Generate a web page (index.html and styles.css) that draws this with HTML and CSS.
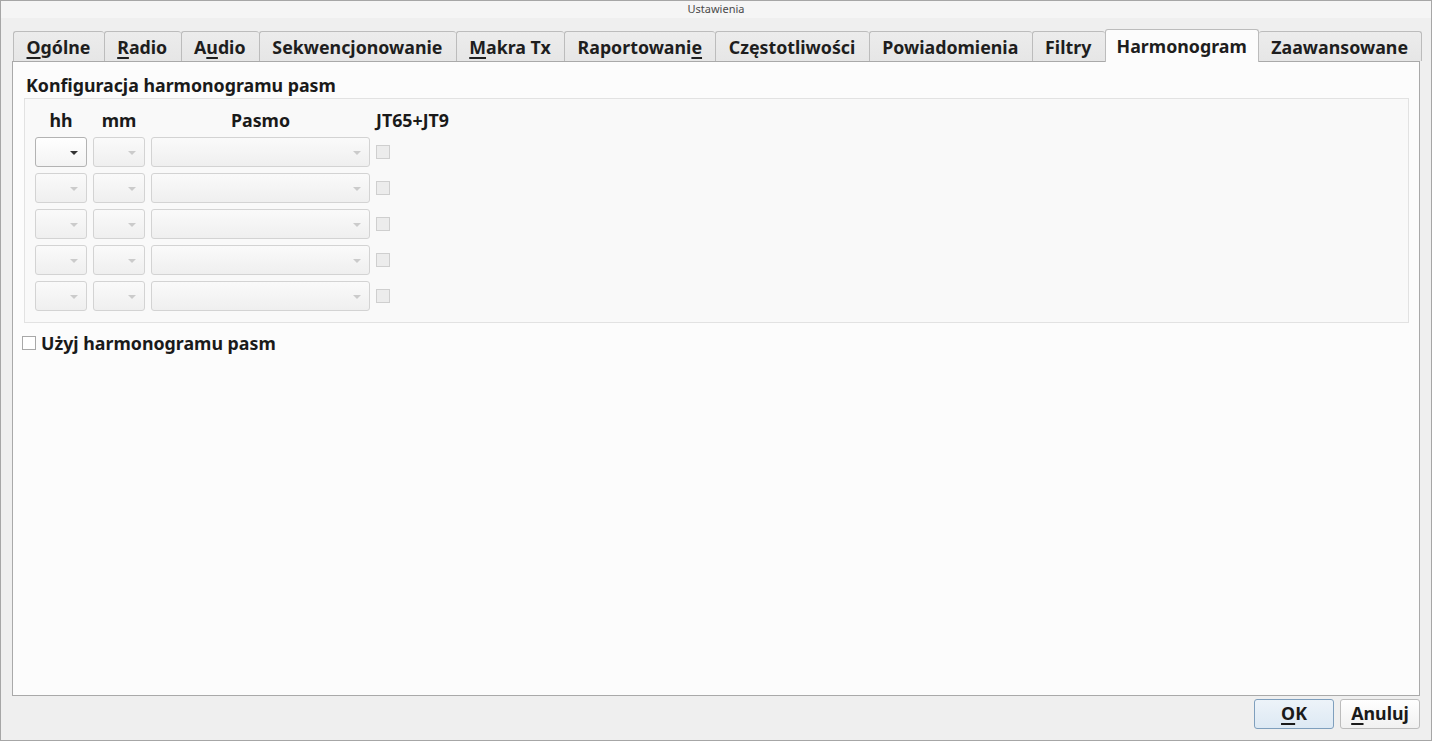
FILE: index.html
```html
<!DOCTYPE html>
<html lang="pl">
<head>
<meta charset="utf-8">
<title>Ustawienia</title>
<link rel="stylesheet" href="styles.css">
</head>
<body>
<div class="window">
  <div class="titlebar">Ustawienia</div>
  <div class="tabs">
    <div class="tab"><u>O</u>gólne</div>
    <div class="tab"><u>R</u>adio</div>
    <div class="tab">A<u>u</u>dio</div>
    <div class="tab">Sekwencjonowanie</div>
    <div class="tab"><u>M</u>akra Tx</div>
    <div class="tab">Raportowani<u>e</u></div>
    <div class="tab">Częstotliwości</div>
    <div class="tab">Powiadomienia</div>
    <div class="tab">Filtry</div>
    <div class="tab active">Harmonogram</div>
    <div class="tab">Zaawansowane</div>
  </div>
  <div class="pane">
    <div class="group-title">Konfiguracja harmonogramu pasm</div>
    <div class="group">
      <div class="grid">
        <div class="hdr c">hh</div>
        <div class="hdr c">mm</div>
        <div class="hdr c">Pasmo</div>
        <div class="hdr">JT65+JT9</div>

        <div class="combo small enabled"><span class="arrow"></span></div>
        <div class="combo small"><span class="arrow"></span></div>
        <div class="combo wide"><span class="arrow"></span></div>
        <div class="cbcell"><span class="cb"></span></div>

        <div class="combo small"><span class="arrow"></span></div>
        <div class="combo small"><span class="arrow"></span></div>
        <div class="combo wide"><span class="arrow"></span></div>
        <div class="cbcell"><span class="cb"></span></div>

        <div class="combo small"><span class="arrow"></span></div>
        <div class="combo small"><span class="arrow"></span></div>
        <div class="combo wide"><span class="arrow"></span></div>
        <div class="cbcell"><span class="cb"></span></div>

        <div class="combo small"><span class="arrow"></span></div>
        <div class="combo small"><span class="arrow"></span></div>
        <div class="combo wide"><span class="arrow"></span></div>
        <div class="cbcell"><span class="cb"></span></div>

        <div class="combo small"><span class="arrow"></span></div>
        <div class="combo small"><span class="arrow"></span></div>
        <div class="combo wide"><span class="arrow"></span></div>
        <div class="cbcell"><span class="cb"></span></div>
      </div>
    </div>
    <label class="use">
      <span class="cb2"></span>
      <span>Użyj harmonogramu pasm</span>
    </label>
  </div>
  <div class="buttons">
    <div class="btn default"><u>O</u>K</div>
    <div class="btn"><u>A</u>nuluj</div>
  </div>
</div>
</body>
</html>
```

FILE: styles.css
```css
* { box-sizing: border-box; }
html, body {
  margin: 0;
  padding: 0;
  width: 1432px;
  height: 741px;
  overflow: hidden;
}
body {
  font-family: "Noto Sans", "Open Sans", sans-serif;
  color: #1a1a1a;
  background: #efefef;
}
.window {
  width: 1432px;
  height: 741px;
  border: 1px solid #a6a6a6;
  background: #efefef;
  display: flex;
  flex-direction: column;
}
.titlebar {
  height: 17px;
  background: #f5f5f5;
  font-size: 11px;
  line-height: 16px;
  text-align: center;
  color: #4a4a4a;
  flex: none;
}
u {
  text-decoration: underline;
  text-decoration-thickness: 2px;
  text-underline-offset: 3px;
}
.tabs {
  display: flex;
  margin: 13px 0 0 12px;
  height: 30px;
  align-items: flex-end;
  flex: none;
  position: relative;
  z-index: 2;
}
.tab {
  height: 30px;
  padding: 0 13.3px 0 12.5px;
  border: 1px solid #bcbcbc;
  border-bottom: none;
  border-right: none;
  border-radius: 3px 3px 0 0;
  background: linear-gradient(#ececec, #e6e6e6);
  font-weight: bold;
  font-size: 17.8px;
  line-height: 30px;
  white-space: nowrap;
  color: #1e1e1e;
}
.tab:last-child { border-right: 1px solid #bcbcbc; }
.tab.active {
  height: 33px;
  margin-bottom: -1px;
  background: #fcfcfc;
  border-right: 1px solid #bcbcbc;
  line-height: 32px;
  padding: 0 11px 3px 11px;
}
.tab.active + .tab { border-left: none; }
.pane {
  margin-left: 11px;
  width: 1408px;
  height: 635px;
  border: 1px solid #a9a9a9;
  background: #fcfcfc;
  padding: 12px 10px 0 11px;
  flex: none;
}
.group-title {
  font-weight: bold;
  font-size: 17.8px;
  line-height: 22px;
  padding-left: 2px;
  margin-bottom: 2px;
}
.group {
  border: 1px solid #e2e2e2;
  background: #f9f9f9;
  height: 225px;
  padding: 10px 0 0 10px;
}
.grid {
  display: grid;
  grid-template-columns: 52px 52px 219px auto;
  grid-auto-rows: 30px;
  grid-template-rows: 22px;
  column-gap: 6px;
  row-gap: 6px;
  align-items: center;
}
.hdr {
  font-weight: bold;
  font-size: 17.8px;
  line-height: 22px;
  white-space: nowrap;
}
.hdr.c { text-align: center; }
.combo {
  height: 30px;
  border: 1px solid #d3d3d3;
  border-radius: 3px;
  background: linear-gradient(#fafafa, #efefef);
  position: relative;
}
.combo.enabled {
  border-color: #b3b3b3;
  background: linear-gradient(#ffffff, #f3f3f3);
}
.arrow {
  position: absolute;
  right: 8px;
  top: 13px;
  width: 0;
  height: 0;
  border-left: 4px solid transparent;
  border-right: 4px solid transparent;
  border-top: 4px solid #cbcbcb;
}
.combo.enabled .arrow { border-top-color: #333; }
.cbcell { display: flex; align-items: center; height: 30px; }
.cb {
  width: 14px;
  height: 14px;
  border: 1px solid #cfcfcf;
  background: #ececec;
  display: block;
}
.use {
  display: flex;
  align-items: center;
  gap: 5px;
  margin-top: 9px;
  margin-left: -2px;
  font-weight: bold;
  font-size: 17.8px;
  line-height: 22px;
}
.cb2 {
  width: 14px;
  height: 14px;
  border: 1px solid #a8a8a8;
  background: #ffffff;
  display: block;
}
.buttons {
  display: flex;
  justify-content: flex-end;
  gap: 6px;
  margin: 3px 11px 0 0;
}
.btn {
  width: 80px;
  height: 30px;
  border: 1px solid #bcbcbc;
  border-radius: 3px;
  background: linear-gradient(#ffffff, #f1f1f1);
  font-weight: bold;
  font-size: 17.8px;
  line-height: 27px;
  text-align: center;
}
.btn.default {
  border-color: #7f9fbd;
  background: linear-gradient(#edf3f9, #dde9f4);
}
```
